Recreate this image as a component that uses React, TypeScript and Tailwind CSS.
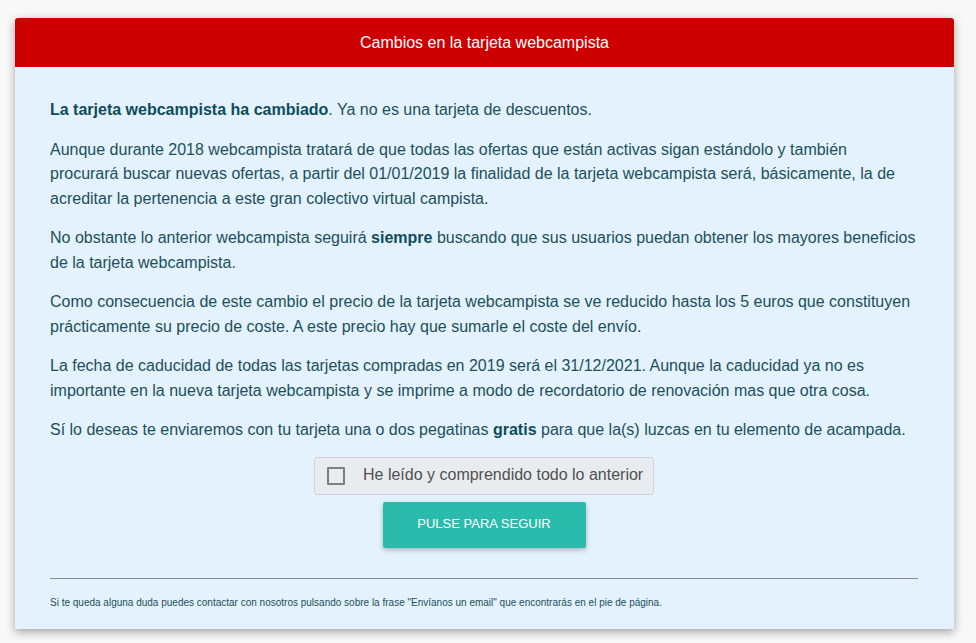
import React, { useState } from 'react'

const font = { fontFamily: '"Liberation Sans", Arial, sans-serif' }

const App = () => {
  const [checked, setChecked] = useState(false)

  return (
    <div className="min-h-[643px] w-[976px] bg-[#f8f8f8] pt-[18px] px-[15px]" style={font}>
      <div className="w-[939px] rounded-t-[3px] bg-[#e3f2fd] shadow-[0_3px_10px_rgba(0,0,0,0.35)]">
        <div className="h-[49px] flex items-center justify-center bg-[#cc0000] rounded-t-[3px] text-white text-[16px]">
          Cambios en la tarjeta webcampista
        </div>
        <div className="pt-[31px] pl-[35px] pr-[36px] pb-[19px] text-[16px] leading-[24.5px] text-[#1c4f5c]">
          <p className="mb-[15px]">
            <b className="text-[#0f4c5a]">La tarjeta webcampista ha cambiado</b>. Ya no es una tarjeta de descuentos.
          </p>
          <p className="mb-[15px]">
            Aunque durante 2018 webcampista tratará de que todas las ofertas que están activas sigan estándolo y también
            procurará buscar nuevas ofertas, a partir del 01/01/2019 la finalidad de la tarjeta webcampista será, básicamente, la de
            acreditar la pertenencia a este gran colectivo virtual campista.
          </p>
          <p className="mb-[15px]">
            No obstante lo anterior webcampista seguirá <b className="text-[#0f4c5a]">siempre</b> buscando que sus usuarios puedan obtener los mayores beneficios
            de la tarjeta webcampista.
          </p>
          <p className="mb-[15px]">
            Como consecuencia de este cambio el precio de la tarjeta webcampista se ve reducido hasta los 5 euros que constituyen
            prácticamente su precio de coste. A este precio hay que sumarle el coste del envío.
          </p>
          <p className="mb-[15px]">
            La fecha de caducidad de todas las tarjetas compradas en 2019 será el 31/12/2021. Aunque la caducidad ya no es
            importante en la nueva tarjeta webcampista y se imprime a modo de recordatorio de renovación mas que otra cosa.
          </p>
          <p className="mb-[14px]">
            Sí lo deseas te enviaremos con tu tarjeta una o dos pegatinas <b className="text-[#0f4c5a]">gratis</b> para que la(s) luzcas en tu elemento de acampada.
          </p>

          <div className="flex flex-col items-center">
            <label
              className="w-[340px] h-[38px] flex items-center gap-[18px] pl-[12px] bg-[#e9ecef] border border-[#cfd4d8] rounded-[3px] cursor-pointer text-[#505050]"
              onClick={() => setChecked(!checked)}
            >
              <span className="w-[18px] h-[18px] border-2 border-[#808080] rounded-[1px] flex items-center justify-center">
                {checked && <span className="w-[8px] h-[8px] bg-[#26a69a]" />}
              </span>
              <span>He leído y comprendido todo lo anterior</span>
            </label>
            <button className="mt-[7px] w-[203px] h-[46px] bg-[#2bbbad] text-white text-[13px] uppercase rounded-[2px] shadow-[0_2px_5px_rgba(0,0,0,0.25)]">
              Pulse para seguir
            </button>
          </div>

          <hr className="mt-[30px] border-t border-[#8a8a8a]" />
          <p className="mt-[17px] text-[10px] leading-[14px] text-[#1c4f5c]">
            Si te queda alguna duda puedes contactar con nosotros pulsando sobre la frase "Envíanos un email" que encontrarás en el pie de página.
          </p>
        </div>
      </div>
    </div>
  )
}

export default App
